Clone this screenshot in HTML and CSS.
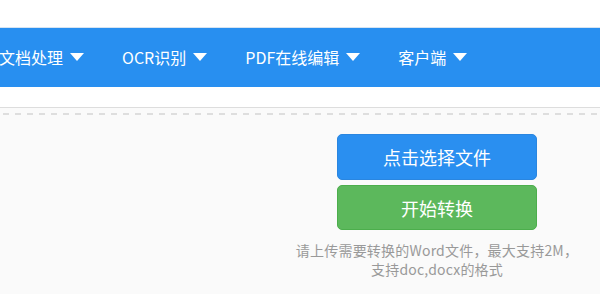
FILE: index.html
```html
<!DOCTYPE html>
<html lang="zh-CN">
<head>
<meta charset="UTF-8">
<meta name="viewport" content="width=device-width, initial-scale=1.0">
<title>Word转换</title>
<link rel="stylesheet" href="styles.css">
</head>
<body>

<div class="top"></div>

<div class="nav">
  <ul class="menu">
    <li>文档处理<span class="caret"></span></li>
    <li>OCR识别<span class="caret"></span></li>
    <li>PDF在线编辑<span class="caret"></span></li>
    <li>客户端<span class="caret"></span></li>
  </ul>
</div>

<div class="main">
  <div class="dash"></div>
  <div class="panel">
    <div class="upload">
      <button class="btn btn-blue">点击选择文件</button>
      <button class="btn btn-green">开始转换</button>
      <p class="tip">请上传需要转换的Word文件，最大支持2M，<br>支持doc,docx的格式</p>
    </div>
  </div>
</div>

</body>
</html>
```

FILE: styles.css
```css
body {
  margin: 0;
  background-color: #fff;
  font-family: "Noto Sans CJK SC", "Noto Sans", sans-serif;
  font-size: 16px;
  overflow: hidden;
}
.top {
  height: 27px;
}
.nav {
  height: 60px;
  background-color: #288ff0;
  border-top: 1px solid #d6e4f2;
  box-sizing: border-box;
}
.menu {
  list-style: none;
  margin: 0 0 0 -1px;
  padding: 0;
  display: flex;
  gap: 38px;
}
.menu li {
  color: #fff;
  line-height: 58px;
  white-space: nowrap;
  display: flex;
  align-items: center;
}
.caret {
  display: inline-block;
  width: 0;
  height: 0;
  margin-left: 7px;
  border-left: 7px solid transparent;
  border-right: 7px solid transparent;
  border-top: 8px solid #fff;
}
.main {
  margin-top: 20px;
  border-top: 1px solid #dddddd;
  background-color: #fafafa;
  height: 200px;
}
.dash {
  margin-top: 5px;
  height: 2px;
  background: repeating-linear-gradient(to right, transparent 0, transparent 3px, #dedede 3px, #dedede 9px, transparent 9px, transparent 12px);
}
.panel {
  display: flex;
  justify-content: flex-end;
  padding: 19px 22px 0 0;
}
.upload {
  width: 282px;
  display: flex;
  flex-direction: column;
  align-items: center;
}
.btn {
  width: 200px;
  height: 46px;
  border-radius: 5px;
  border: 1px solid;
  color: #fff;
  font-family: "Noto Sans CJK SC", "Noto Sans", sans-serif;
  font-size: 18px;
  cursor: pointer;
  padding: 0;
}
.btn-blue {
  background-color: #2a8ff0;
  border-color: #2a86e0;
}
.btn-green {
  margin-top: 5px;
  height: 45px;
  background-color: #5cb85c;
  border-color: #4cae4c;
}
.tip {
  margin: 11px 0 0;
  color: #999;
  font-size: 14px;
  line-height: 19px;
  text-align: center;
  white-space: nowrap;
  letter-spacing: 0.2px;
}
```
